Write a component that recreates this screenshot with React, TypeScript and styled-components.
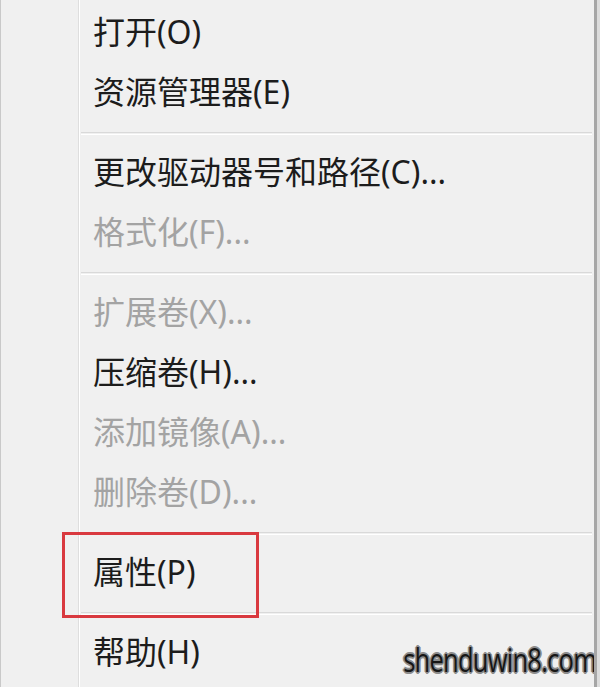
import React from "react";
import styled, { createGlobalStyle } from "styled-components";

const GlobalStyle = createGlobalStyle`
    html, body {
        margin: 0;
        padding: 0;
        background: #dcdcdc;
    }
    body {
        font-family: "Noto Sans", "Noto Sans CJK SC", sans-serif;
    }
`;

const Menu = styled.div`
    position: relative;
    width: 597px;
    height: 687px;
    box-sizing: border-box;
    display: grid;
    grid-template-columns: 78px 1fr;
    background: #f0f0f0;
    border-left: 1px solid #c9c9c9;
    border-right: 3px solid #a6a6a6;
    overflow: hidden;
`;

const Gutter = styled.div`
    border-right: 1px solid #dedede;
    box-shadow: 1px 0 0 #ffffff;
`;

const List = styled.ul`
    list-style: none;
    margin: 0;
    padding: 3px 0 0 2px;
`;

const Item = styled.li<{ disabled?: boolean }>`
    position: relative;
    height: 60px;
    box-sizing: border-box;
    display: flex;
    align-items: center;
    padding: 0 0 6px 12px;
    font-family: "Noto Sans", "Noto Sans CJK SC", sans-serif;
    font-size: 32px;
    color: ${p => (p.disabled ? "#a3a3a3" : "#1c1c1c")};
`;

const Separator = styled.li`
    height: 20px;
    display: flex;
    align-items: center;
    margin-right: 2px;
    &::after {
        content: "";
        flex: 1;
        height: 1px;
        border-top: 1px solid #d9d9d9;
        border-bottom: 1px solid #ffffff;
    }
`;

// annotation box drawn over the "属性" row
const Highlight = styled.span`
    position: absolute;
    left: -19px;
    top: -11px;
    width: 197px;
    height: 86px;
    box-sizing: border-box;
    border: 3px solid #d9393f;
    pointer-events: none;
`;

const Watermark = styled.div`
    position: absolute;
    right: -2px;
    bottom: 6px;
    font-family: "Open Sans", "Noto Sans", sans-serif;
    font-size: 32px;
    letter-spacing: -1px;
    color: #161616;
    transform: scaleX(0.8);
    transform-origin: right center;
    text-shadow: 2px 0 0 #8c8c8c, -2px 0 0 #8c8c8c, 0 2px 0 #8c8c8c,
        0 -2px 0 #8c8c8c, 1px 1px 0 #8c8c8c, -1px -1px 0 #8c8c8c,
        1px -1px 0 #8c8c8c, -1px 1px 0 #8c8c8c;
`;

type Entry = { label: string; disabled?: boolean; boxed?: boolean } | "sep";

const entries: Entry[] = [
    { label: "打开(O)" },
    { label: "资源管理器(E)" },
    "sep",
    { label: "更改驱动器号和路径(C)..." },
    { label: "格式化(F)...", disabled: true },
    "sep",
    { label: "扩展卷(X)...", disabled: true },
    { label: "压缩卷(H)..." },
    { label: "添加镜像(A)...", disabled: true },
    { label: "删除卷(D)...", disabled: true },
    "sep",
    { label: "属性(P)", boxed: true },
    "sep",
    { label: "帮助(H)" },
];

const App = () => {
    return (
        <>
            <GlobalStyle />
            <Menu>
                <Gutter />
                <List>
                    {entries.map((e, i) =>
                        e === "sep" ? (
                            <Separator key={i} />
                        ) : (
                            <Item key={i} disabled={e.disabled}>
                                {e.boxed && <Highlight />}
                                {e.label}
                            </Item>
                        )
                    )}
                </List>
                <Watermark>shenduwin8.com</Watermark>
            </Menu>
        </>
    );
};

export default App;
